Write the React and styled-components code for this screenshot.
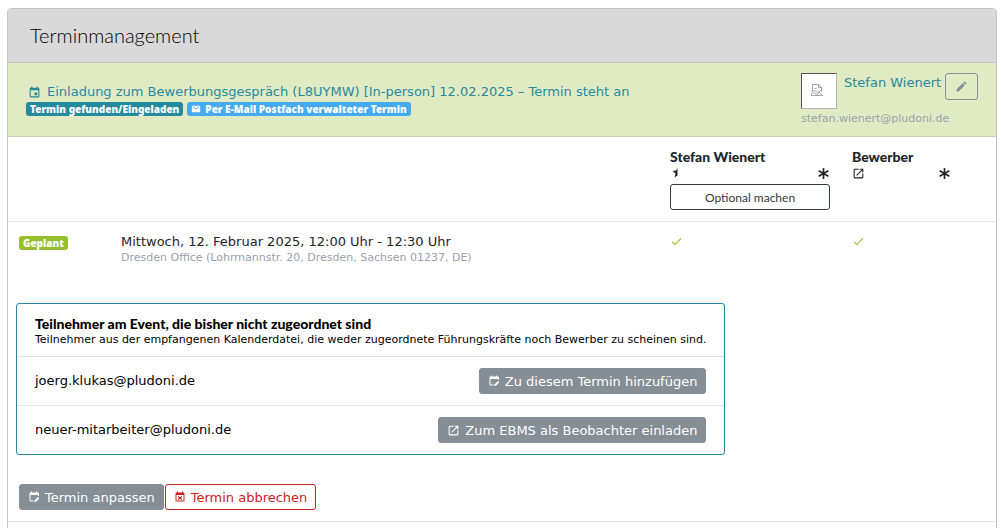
import styled, { createGlobalStyle, css } from "styled-components";
import {
  MdCheck,
  MdEdit,
  MdEmail,
  MdEvent,
  MdOpenInNew,
} from "react-icons/md";

const GlobalStyle = createGlobalStyle`
  * {
    box-sizing: border-box;
  }

  body {
    margin: 0;
    background: #ffffff;
    color: #212529;
    font-family: Verdana, "DejaVu Sans", sans-serif;
    font-size: 13px;
    line-height: 20px;
  }
`;

const displayFont = css`
  font-family: "Gill Sans", Lato, sans-serif;
`;

const Page = styled.main`
  padding: 8px 6px 0 7px;
`;

const Card = styled.section`
  border: 1px solid #c4c4c6;
  border-radius: 4px 4px 0 0;
  background: #ffffff;
  overflow: hidden;
`;

const CardHeader = styled.header`
  padding: 11px 22px 12px;
  background: #d9d9d9;
  border-bottom: 1px solid #c4c4c6;
`;

const Title = styled.h1`
  ${displayFont}
  margin: 0;
  color: #000000;
  font-size: 20px;
  font-weight: 300;
  line-height: 30px;
`;

const Banner = styled.div`
  display: flex;
  justify-content: space-between;
  align-items: flex-start;
  padding: 10px 18px 7px;
  background: #e1ebc3;
  border-bottom: 1px solid #c8d0b2;
`;

const Invitation = styled.div`
  padding-top: 9px;
`;

const InvitationLink = styled.a`
  display: flex;
  align-items: center;
  gap: 6px;
  padding-left: 2px;
  color: #2589a0;
  text-decoration: none;
`;

const Badges = styled.div`
  display: flex;
  gap: 4px;
`;

const Badge = styled.span`
  display: inline-flex;
  align-items: center;
  gap: 4px;
  height: 14px;
  padding: 0 4px;
  border-radius: 3px;
  background: ${(props) => props.$color};
  color: #ffffff;
  font-family: "Noto Sans", sans-serif;
  font-size: 10px;
  font-weight: 900;
  line-height: 14px;
  vertical-align: middle;
`;

const Owner = styled.div`
  width: 177px;
`;

const OwnerRow = styled.div`
  display: flex;
  align-items: flex-start;
  gap: 7px;
`;

const Avatar = styled.span`
  display: flex;
  flex: none;
  width: 36px;
  height: 36px;
  padding: 9px 8px;
  border: 1px solid #b4b4b4;
  border-top-color: #555555;
  border-left-color: #555555;
  background: #ffffff;
`;

const OwnerLink = styled.a`
  flex: 1;
  min-width: 0;
  color: #2589a0;
  text-decoration: none;
  white-space: nowrap;
`;

const OwnerMail = styled.div`
  color: #9a9fad;
  font-size: 11px;
  line-height: 20px;
`;

const EditButton = styled.button`
  display: flex;
  flex: none;
  align-items: center;
  justify-content: center;
  width: 33px;
  height: 27px;
  padding: 0;
  border: 1px solid #868e96;
  border-radius: 3px;
  background: transparent;
  color: #868e96;
`;

const Schedule = styled.table`
  width: 100%;
  table-layout: fixed;
  border-collapse: collapse;
`;

const HeadCell = styled.th`
  ${displayFont}
  width: ${(props) => props.$width};
  padding: 11px 11px;
  border-bottom: 1px solid #dee2e6;
  font-size: 14px;
  font-weight: 900;
  line-height: 18px;
  text-align: left;
  vertical-align: top;
`;

const HeadIcons = styled.div`
  display: flex;
  align-items: center;
  justify-content: space-between;
  height: 14px;
`;

const OptionalButton = styled.button`
  ${displayFont}
  display: block;
  width: 100%;
  height: 26px;
  margin-top: 4px;
  padding: 0;
  border: 1px solid #343a40;
  border-radius: 3px;
  background: #ffffff;
  color: #343a40;
  font-size: 12px;
`;

const Cell = styled.td`
  padding: 10px 11px 12px;
  vertical-align: top;
`;

const Place = styled.div`
  color: #9a9fad;
  font-size: 11px;
  line-height: 12px;
`;

const Check = styled(MdCheck)`
  display: block;
  margin-top: 3px;
  color: #97bf2d;
`;

const Unassigned = styled.section`
  width: fit-content;
  margin: 27px 8px 0;
  border: 1px solid #2589a0;
  border-radius: 3px;
  color: #000000;
`;

const UnassignedHead = styled.header`
  padding: 12px 18px 9px;
`;

const UnassignedTitle = styled.h2`
  ${displayFont}
  margin: 0;
  font-size: 14px;
  font-weight: 900;
  line-height: 16px;
`;

const UnassignedText = styled.p`
  margin: 0;
  font-size: 11px;
  line-height: 15px;
`;

const Participant = styled.div`
  display: flex;
  align-items: center;
  justify-content: space-between;
  padding: 11px 18px;
  border-top: 1px solid #dee2e6;
`;

const Button = styled.button`
  display: inline-flex;
  align-items: center;
  gap: 5px;
  height: 26px;
  padding: 0 8px;
  border: 1px solid #868e96;
  border-radius: 3px;
  background: #868e96;
  color: #ffffff;
  font-family: inherit;
  font-size: 13px;

  ${(props) =>
    props.$danger &&
    css`
      border-color: #cd201f;
      background: #ffffff;
      color: #cd201f;
    `}
`;

const Actions = styled.footer`
  display: flex;
  gap: 1px;
  padding: 29px 11px 11px;
  border-bottom: 1px solid #dee2e6;
`;

const Rest = styled.div`
  height: 24px;
`;

function BrokenImageIcon() {
  return (
    <svg width="14" height="14" viewBox="0 0 14 14" fill="none" stroke="#a3a3a3">
      <path d="M2.500 8.500v-7h6l3 3v4M8.500 1.500v3h3M4.500 5.500h2M2.500 8.500l2-1 3 2 4-2M1.500 12.500v-2l2-1 3 2 3-2 3 3z" />
    </svg>
  );
}

function CalendarEditIcon() {
  return (
    <svg width="12" height="12" viewBox="0 0 24 24" fill="currentColor">
      <path d="M4 3h2V1h2v2h8V1h2v2h2c1.100 0 2 .9 2 2v5h-2V8H5v11h6v2H5a2 2 0 0 1-2-2V4z" />
      <path d="M13 22v-3l7-7 2.500 2.500-7 7.500z" />
    </svg>
  );
}

function CalendarRemoveIcon() {
  return (
    <svg width="12" height="12" viewBox="0 0 24 24" fill="currentColor">
      <path
        fillRule="evenodd"
        d="M19 3h-1V1h-2v2H8V1H6v2H5a2 2 0 0 0-2 2v14a2 2 0 0 0 2 2h14a2 2 0 0 0 2-2V5a2 2 0 0 0-2-2zm0 16H5V8h14z"
      />
      <path d="m9 10 3 2.500 3-2.500 1.500 1.500L14 14l2.500 2.500L15 18l-3-2.500L9 18l-1.500-1.500L10 14l-2.500-2.500z" />
    </svg>
  );
}

function StarHalfIcon() {
  return (
    <svg width="12" height="12" viewBox="0 0 24 24" fill="currentColor">
      <path d="M15 2v15l-6 4 2-8-6-5 7-1z" />
    </svg>
  );
}

function AsteriskIcon() {
  return (
    <svg width="13" height="13" viewBox="0 0 24 24" stroke="currentColor" strokeWidth="3">
      <path d="M12 2v20M3 7l18 10M21 7 3 17" />
    </svg>
  );
}

function App() {
  return (
    <>
      <GlobalStyle />
      <Page>
        <Card>
          <CardHeader>
            <Title>Terminmanagement</Title>
          </CardHeader>

          <Banner>
            <Invitation>
              <InvitationLink href="#termin">
                <MdEvent size={13} />
                Einladung zum Bewerbungsgespräch (L8UYMW) [In-person] 12.02.2025 – Termin steht an
              </InvitationLink>
              <Badges>
                <Badge $color="#2589a0">Termin gefunden/Eingeladen</Badge>
                <Badge $color="#45aaf2">
                  <MdEmail size={10} />
                  Per E-Mail Postfach verwalteter Termin
                </Badge>
              </Badges>
            </Invitation>
            <Owner>
              <OwnerRow>
                <Avatar role="img" aria-label="Stefan Wienert">
                  <BrokenImageIcon />
                </Avatar>
                <OwnerLink href="#stefan-wienert">Stefan Wienert</OwnerLink>
                <EditButton aria-label="Bearbeiten">
                  <MdEdit size={13} />
                </EditButton>
              </OwnerRow>
              <OwnerMail>stefan.wienert@pludoni.de</OwnerMail>
            </Owner>
          </Banner>

          <Schedule>
            <thead>
              <tr>
                <HeadCell $width="102px" />
                <HeadCell />
                <HeadCell $width="182px">
                  Stefan Wienert
                  <HeadIcons>
                    <StarHalfIcon />
                    <AsteriskIcon />
                  </HeadIcons>
                  <OptionalButton>Optional machen</OptionalButton>
                </HeadCell>
                <HeadCell $width="121px">
                  Bewerber
                  <HeadIcons>
                    <MdOpenInNew size={13} />
                    <AsteriskIcon />
                  </HeadIcons>
                </HeadCell>
                <HeadCell $width="34px" />
              </tr>
            </thead>
            <tbody>
              <tr>
                <Cell>
                  <Badge $color="#97bf2d">Geplant</Badge>
                </Cell>
                <Cell>
                  Mittwoch, 12. Februar 2025, 12:00 Uhr - 12:30 Uhr
                  <Place>Dresden Office (Lohrmannstr. 20, Dresden, Sachsen 01237, DE)</Place>
                </Cell>
                <Cell>
                  <Check size={13} />
                </Cell>
                <Cell>
                  <Check size={13} />
                </Cell>
                <Cell />
              </tr>
            </tbody>
          </Schedule>

          <Unassigned>
            <UnassignedHead>
              <UnassignedTitle>Teilnehmer am Event, die bisher nicht zugeordnet sind</UnassignedTitle>
              <UnassignedText>
                Teilnehmer aus der empfangenen Kalenderdatei, die weder zugeordnete Führungskräfte noch Bewerber zu
                scheinen sind.
              </UnassignedText>
            </UnassignedHead>
            <Participant>
              joerg.klukas@pludoni.de
              <Button>
                <CalendarEditIcon />
                Zu diesem Termin hinzufügen
              </Button>
            </Participant>
            <Participant>
              neuer-mitarbeiter@pludoni.de
              <Button>
                <MdOpenInNew size={13} />
                Zum EBMS als Beobachter einladen
              </Button>
            </Participant>
          </Unassigned>

          <Actions>
            <Button>
              <CalendarEditIcon />
              Termin anpassen
            </Button>
            <Button $danger>
              <CalendarRemoveIcon />
              Termin abbrechen
            </Button>
          </Actions>
          <Rest />
        </Card>
      </Page>
    </>
  );
}

export default App;
